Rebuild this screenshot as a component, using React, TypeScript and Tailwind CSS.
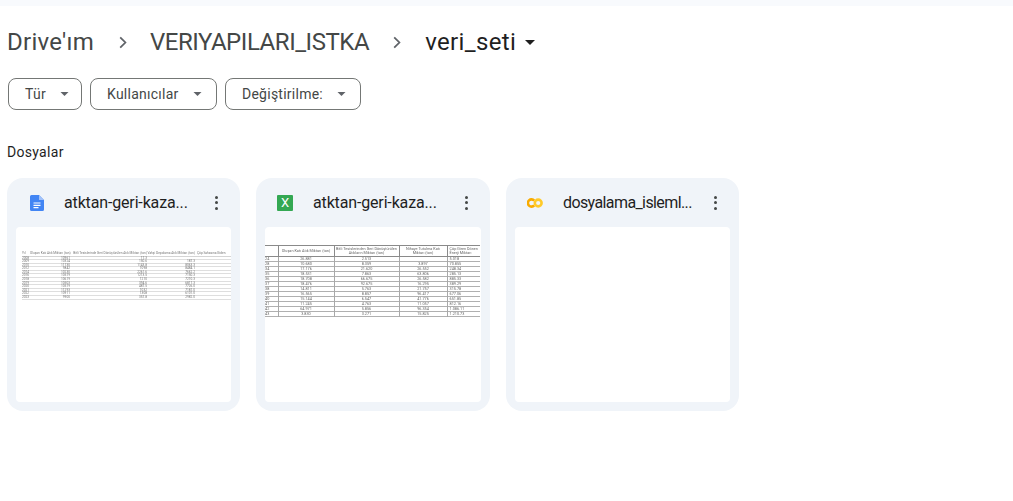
import React from "react";

const font = { fontFamily: "Roboto, 'Liberation Sans', sans-serif" };

function Caret({ className }: { className: string }) {
  return (
    <svg viewBox="0 0 10 5" className={className} fill="currentColor">
      <path d="M0 0h10L5 5z" />
    </svg>
  );
}

function Chevron() {
  return (
    <svg viewBox="0 0 10 16" className="h-[13px] w-[8px] text-[#5f6368]" fill="none" stroke="currentColor" strokeWidth="2.2">
      <path d="M1.5 1.5 8 8l-6.5 6.5" />
    </svg>
  );
}

function Chip({ label, width }: { label: string; width: string }) {
  return (
    <button className={`flex h-8 items-center gap-[14px] rounded-lg border border-[#747775] pl-[16px] text-sm tracking-[0.25px] text-[#444746] ${width}`}>
      <span>{label}</span>
      <Caret className="h-[4px] w-[9px] text-[#5f6368]" />
    </button>
  );
}

function DocsIcon() {
  return (
    <svg viewBox="0 0 14 16" className="h-4 w-[14px]">
      <path d="M1.5 0H9l5 5v9.5a1.5 1.5 0 0 1-1.5 1.5h-11A1.5 1.5 0 0 1 0 14.5v-13A1.5 1.5 0 0 1 1.5 0z" fill="#4285f4" />
      <path d="M9 0l5 5H9z" fill="#a1c2fa" />
      <path d="M3.5 7.5h7v1.1h-7zM3.5 9.8h7v1.1h-7zM3.5 12.1h5v1.1h-5z" fill="#fff" />
    </svg>
  );
}

function ExcelIcon() {
  return (
    <div className="flex h-4 w-4 items-center justify-center rounded-[1px] bg-[#34a853] text-[13px] leading-none text-white">X</div>
  );
}

function ColabIcon() {
  return (
    <svg viewBox="0 0 16 10" className="h-[10px] w-4" fill="none" strokeWidth="2.6">
      <path d="M7.2 2.6a3.6 3.6 0 1 0 0 4.8" stroke="#f9ab00" />
      <circle cx="11.2" cy="5" r="3.4" stroke="#ffca28" />
    </svg>
  );
}

function Dots() {
  return (
    <div className="flex h-4 w-4 flex-col items-center justify-between py-[1px]">
      <span className="h-[3px] w-[3px] rounded-full bg-[#444746]" />
      <span className="h-[3px] w-[3px] rounded-full bg-[#444746]" />
      <span className="h-[3px] w-[3px] rounded-full bg-[#444746]" />
    </div>
  );
}

const rows1 = [
  ["2008", "10961", "17.3", ""],
  ["2009", "10324", "150.6", "187.3"],
  ["2010", "11730", "1143.8", "8063.3"],
  ["2012", "9842", "1098", "8484.1"],
  ["2014", "10230", "2261.6", "7662.2"],
  ["2016", "10579", "1213.5", "7150.3"],
  ["2018", "10619", "1210", "7210.3"],
  ["2019", "10503", "394.6", "6817.3"],
  ["2020", "10519", "487.5", "7726.0"],
  ["2021", "11293", "1032", "7187.0"],
  ["2022", "10911", "1308", "6101.0"],
  ["2023", "9900", "357.8", "2982.0"],
];

function Thumb1() {
  return (
    <div className="h-full overflow-hidden pt-[24px] pl-[6px]">
      <table className="w-[209px] table-fixed border-collapse text-[3.2px] leading-[2.6px] text-[#777] blur-[0.3px]">
        <colgroup>
          <col className="w-[8px]" />
          <col className="w-[40px]" />
          <col className="w-[77px]" />
          <col className="w-[48px]" />
          <col className="w-[36px]" />
        </colgroup>
        <thead>
          <tr className="h-[5px] border-b border-[#d4d4d4] whitespace-nowrap">
            <th className="text-left font-normal">Yıl</th>
            <th className="text-right font-normal">Oluşan Katı Atık Miktarı (ton)</th>
            <th className="text-right font-normal">Bitli Tesislerinde Geri Dönüştürülen Atık Miktarı (ton)</th>
            <th className="text-right font-normal">Vahşi Depolama Atık Miktarı (ton)</th>
            <th className="pl-[2px] text-left font-normal">Çöp Sahasına Giden</th>
          </tr>
        </thead>
        <tbody>
          {rows1.map((r) => (
            <tr key={r[0]} className="h-[3.6px] border-b border-[#dedede]">
              <td>{r[0]}</td>
              <td className="text-right">{r[1]}</td>
              <td className="text-right">{r[2]}</td>
              <td className="text-right">{r[3]}</td>
              <td />
            </tr>
          ))}
        </tbody>
      </table>
    </div>
  );
}

const rows2 = [
  ["24", "26.881", "2.513", "", "5.018"],
  ["28", "10.680", "8.359", "3.897", "70.855"],
  ["34", "17.176", "21.620", "26.552", "248.34"],
  ["35", "18.531", "7.863", "63.806", "285.13"],
  ["36", "18.708", "66.675", "26.582", "885.33"],
  ["37", "18.476", "92.675", "16.295", "389.29"],
  ["38", "14.811", "5.763", "21.757", "315.78"],
  ["39", "16.565", "8.857", "96.417", "677.06"],
  ["40", "15.144", "6.547", "41.776", "651.85"],
  ["41", "11.245", "4.763", "11.057", "812.16"],
  ["42", "64.971", "5.856", "96.354", "1.086.11"],
  ["43", "3.830", "3.271", "15.825", "1.210.73"],
];

function Thumb2() {
  return (
    <div className="h-full overflow-hidden pt-[18px]">
      <table className="w-[215px] table-fixed border-collapse text-center text-[3.8px] leading-[4px] text-[#666] blur-[0.3px]">
        <colgroup>
          <col className="w-[13px]" />
          <col className="w-[56px]" />
          <col className="w-[65px]" />
          <col className="w-[48px]" />
          <col className="w-[33px]" />
        </colgroup>
        <thead>
          <tr className="h-[11px] border-y border-[#8a8a8a] whitespace-nowrap">
            <th className="font-normal" />
            <th className="border-x border-[#8a8a8a] font-normal">Oluşan Katı Atık Miktarı (ton)</th>
            <th className="border-r border-[#8a8a8a] font-normal">Bitli Tesislerinden Geri Dönüştürülen<br />Atıkların Miktarı (ton)</th>
            <th className="border-r border-[#8a8a8a] font-normal">Nihaye Tutulma Katı<br />Miktarı (ton)</th>
            <th className="pl-[2px] text-left font-normal">Çöp Giren Dönen<br />Enerji Miktarı</th>
          </tr>
        </thead>
        <tbody>
          {rows2.map((r) => (
            <tr key={r[0]} className="h-[5px] border-b border-[#b0b0b0]">
              <td className="text-left">{r[0]}</td>
              <td className="border-x border-[#a8a8a8]">{r[1]}</td>
              <td className="border-r border-[#a8a8a8]">{r[2]}</td>
              <td className="border-r border-[#a8a8a8]">{r[3]}</td>
              <td className="pl-[2px] text-left whitespace-nowrap">{r[4]}</td>
            </tr>
          ))}
        </tbody>
      </table>
    </div>
  );
}

function Card({ icon, iconBox, name, tracking, width, children }: { icon: React.ReactNode; iconBox: string; name: string; tracking: string; width: string; children?: React.ReactNode }) {
  return (
    <div className={`flex h-[233px] flex-col rounded-2xl bg-[#f0f4f9] px-[9px] pb-[9px] ${width}`}>
      <div className="flex h-[49px] shrink-0 items-center pr-[7px]">
        <div className={`flex shrink-0 ${iconBox}`}>{icon}</div>
        <div className={`text-base leading-5 whitespace-nowrap text-[#1f1f1f] ${tracking}`}>{name}</div>
        <div className="ml-auto"><Dots /></div>
      </div>
      <div className="min-h-0 flex-1 rounded-[4px] bg-white">{children}</div>
    </div>
  );
}

export default function App() {
  return (
    <div className="h-[501px] w-[1013px] overflow-hidden bg-white" style={font}>
      <div className="h-[6px] bg-[#f8fafd]" />
      <div className="flex h-[72px] items-center pl-[7px] text-2xl text-[#444746]">
        <span className="tracking-[0.25px]">Drive'ım</span>
        <span className="mr-[23px] ml-[25px] flex"><Chevron /></span>
        <span className="tracking-[-0.45px]">VERIYAPILARI_ISTKA</span>
        <span className="mr-[24px] ml-[24px] flex"><Chevron /></span>
        <span className="tracking-[0.35px] text-[#1f1f1f]">veri_seti</span>
        <Caret className="ml-[9px] h-[5px] w-[10px] text-[#1f1f1f]" />
      </div>
      <div className="flex gap-2 pl-[8px]">
        <Chip label="Tür" width="w-[74px]" />
        <Chip label="Kullanıcılar" width="w-[127px]" />
        <Chip label="Değiştirilme:" width="w-[136px]" />
      </div>
      <div className="pt-[32px] pb-[16px] pl-[7px] text-sm leading-5 tracking-[0.3px] text-[#1f1f1f]">Dosyalar</div>
      <div className="flex gap-4 pl-[7px]">
        <Card icon={<DocsIcon />} iconBox="w-[48px] pl-[14px]" name="atktan-geri-kaza..." tracking="tracking-[-0.15px]" width="w-[233px]"><Thumb1 /></Card>
        <Card icon={<ExcelIcon />} iconBox="w-[48px] pl-[12px]" name="atktan-geri-kaza..." tracking="tracking-[-0.15px]" width="w-[234px]"><Thumb2 /></Card>
        <Card icon={<ColabIcon />} iconBox="w-[48px] pl-[12px]" name="dosyalama_isleml..." tracking="tracking-[-0.6px]" width="w-[233px]" />
      </div>
    </div>
  );
}
